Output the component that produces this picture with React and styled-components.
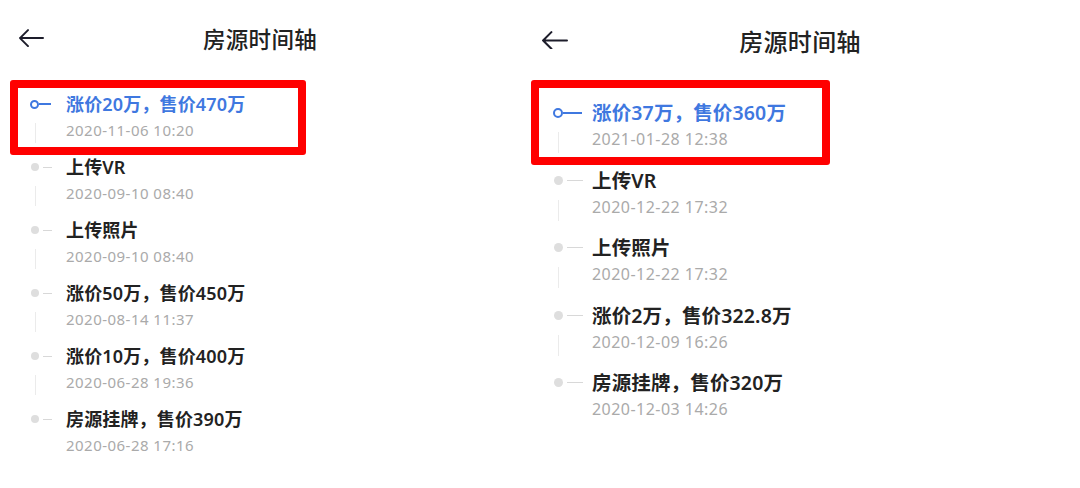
import React from 'react';
import styled, { createGlobalStyle } from 'styled-components';

const GlobalStyle = createGlobalStyle`
  html, body {
    margin: 0;
    padding: 0;
    background: #fff;
  }
  body {
    font-family: "Noto Sans", "Noto Sans CJK SC", sans-serif;
    -webkit-font-smoothing: antialiased;
  }
`;

const Page = styled.div`
  display: flex;
  width: 1080px;
  height: 488px;
  overflow: hidden;
  background: #fff;
`;

const Panel = styled.div`
  width: ${(p) => p.$w}px;
  display: flex;
  flex-direction: column;
`;

const Header = styled.div`
  height: ${(p) => p.$h}px;
  display: grid;
  grid-template-columns: 1fr auto 1fr;
  align-items: start;
  padding-top: ${(p) => p.$top}px;
  box-sizing: border-box;
`;

const Back = styled.div`
  padding-left: ${(p) => p.$left}px;
  display: flex;
  align-items: center;
  height: ${(p) => p.$lh}px;
  margin-top: -2px;
`;

const Title = styled.div`
  font-size: ${(p) => p.$size}px;
  line-height: ${(p) => p.$lh}px;
  font-weight: 500;
  color: #222;
  letter-spacing: 0.3px;
`;

const List = styled.div`
  display: flex;
  flex-direction: column;
  padding-left: ${(p) => p.$left}px;
`;

const Item = styled.div`
  position: relative;
  display: flex;
  padding-bottom: ${(p) => p.$gap}px;
`;

const Marker = styled.div`
  width: ${(p) => p.$w}px;
  flex-shrink: 0;
  display: flex;
  flex-direction: column;
`;

const DotRow = styled.div`
  height: ${(p) => p.$lh}px;
  display: flex;
  align-items: center;
`;

const Dot = styled.span`
  box-sizing: border-box;
  width: ${(p) => p.$d}px;
  height: ${(p) => p.$d}px;
  border-radius: 50%;
  background: ${(p) => (p.$active ? '#fff' : '#dedede')};
  border: ${(p) => (p.$active ? '2px solid #3f78e0' : 'none')};
  margin-left: ${(p) => (p.$active ? 0 : 1)}px;
`;

const Dash = styled.span`
  height: ${(p) => (p.$active ? 2 : 1)}px;
  width: ${(p) => p.$len}px;
  margin-left: ${(p) => (p.$active ? 0 : 4)}px;
  background: ${(p) => (p.$active ? '#3f78e0' : '#d8d8d8')};
`;

const Rail = styled.span`
  flex: 1;
  width: 1px;
  margin-left: ${(p) => p.$x}px;
  margin-top: 6px;
  background: #ebebeb;
`;

const Content = styled.div`
  display: flex;
  flex-direction: column;
`;

const EventTitle = styled.div`
  font-size: ${(p) => p.$size}px;
  line-height: ${(p) => p.$lh}px;
  font-weight: 600;
  letter-spacing: 0.15px;
  color: ${(p) => (p.$active ? '#3f78e0' : '#222')};
`;

const EventTime = styled.div`
  font-size: ${(p) => p.$size}px;
  line-height: ${(p) => p.$lh}px;
  color: #aaa;
  letter-spacing: 0.47px;
`;

const Highlight = styled.div`
  position: absolute;
  top: ${(p) => p.$top}px;
  left: ${(p) => p.$left}px;
  width: ${(p) => p.$w}px;
  bottom: ${(p) => p.$bottom}px;
  border: 8px solid #ff0000;
  border-radius: 3px;
  box-sizing: border-box;
  pointer-events: none;
`;

function BackArrow({ size }) {
  return (
    <svg width={size} height={size * 0.7} viewBox="0 0 26 18" fill="none">
      <path
        d="M2 9H25M10 1L2 9L10 17"
        stroke="#1d1d2b"
        strokeWidth="2"
        strokeLinecap="round"
        strokeLinejoin="round"
      />
    </svg>
  );
}

const leftEvents = [
  ['涨价20万，售价470万', '2020-11-06 10:20'],
  ['上传VR', '2020-09-10 08:40'],
  ['上传照片', '2020-09-10 08:40'],
  ['涨价50万，售价450万', '2020-08-14 11:37'],
  ['涨价10万，售价400万', '2020-06-28 19:36'],
  ['房源挂牌，售价390万', '2020-06-28 17:16'],
];

const rightEvents = [
  ['涨价37万，售价360万', '2021-01-28 12:38'],
  ['上传VR', '2020-12-22 17:32'],
  ['上传照片', '2020-12-22 17:32'],
  ['涨价2万，售价322.8万', '2020-12-09 16:26'],
  ['房源挂牌，售价320万', '2020-12-03 14:26'],
];

const leftCfg = {
  width: 520,
  headerH: 91,
  headerTop: 27,
  backLeft: 18,
  arrow: 26,
  titleSize: 22.5,
  titleLh: 26,
  listLeft: 30,
  marker: 36,
  dot: 9,
  dash: 12,
  rail: 4.5,
  lh: 26,
  gap: 11,
  nameSize: 18,
  timeSize: 15,
  box: { top: -11, left: -20, w: 296, bottom: -1 },
};

const rightCfg = {
  width: 560,
  headerH: 99,
  headerTop: 28,
  backLeft: 21,
  arrow: 27,
  titleSize: 24,
  titleLh: 28,
  listLeft: 33,
  marker: 39,
  dot: 10,
  dash: 19,
  rail: 4.5,
  lh: 27,
  gap: 13.5,
  nameSize: 19.5,
  timeSize: 16,
  box: { top: -19, left: -22, w: 299, bottom: 2 },
};

function Timeline({ cfg, events }) {
  return (
    <Panel $w={cfg.width}>
      <Header $h={cfg.headerH} $top={cfg.headerTop}>
        <Back $left={cfg.backLeft} $lh={cfg.titleLh}>
          <BackArrow size={cfg.arrow} />
        </Back>
        <Title $size={cfg.titleSize} $lh={cfg.titleLh}>房源时间轴</Title>
        <div />
      </Header>
      <List $left={cfg.listLeft}>
        {events.map(([name, time], i) => {
          const active = i === 0;
          const last = i === events.length - 1;
          return (
            <Item key={time + i} $gap={cfg.gap}>
              <Marker $w={cfg.marker}>
                <DotRow $lh={cfg.lh}>
                  <Dot $active={active} $d={active ? cfg.dot : cfg.dot - 1} />
                  <Dash $active={active} $len={active ? cfg.dash : cfg.dash - 3} />
                </DotRow>
                {!last && <Rail $x={cfg.rail} />}
              </Marker>
              <Content>
                <EventTitle $active={active} $size={cfg.nameSize} $lh={cfg.lh}>
                  {name}
                </EventTitle>
                <EventTime $size={cfg.timeSize} $lh={cfg.lh}>
                  {time}
                </EventTime>
              </Content>
              {active && (
                <Highlight
                  $top={cfg.box.top}
                  $left={cfg.box.left}
                  $w={cfg.box.w}
                  $bottom={cfg.box.bottom}
                />
              )}
            </Item>
          );
        })}
      </List>
    </Panel>
  );
}

export default function App() {
  return (
    <>
      <GlobalStyle />
      <Page>
        <Timeline cfg={leftCfg} events={leftEvents} />
        <Timeline cfg={rightCfg} events={rightEvents} />
      </Page>
    </>
  );
}
